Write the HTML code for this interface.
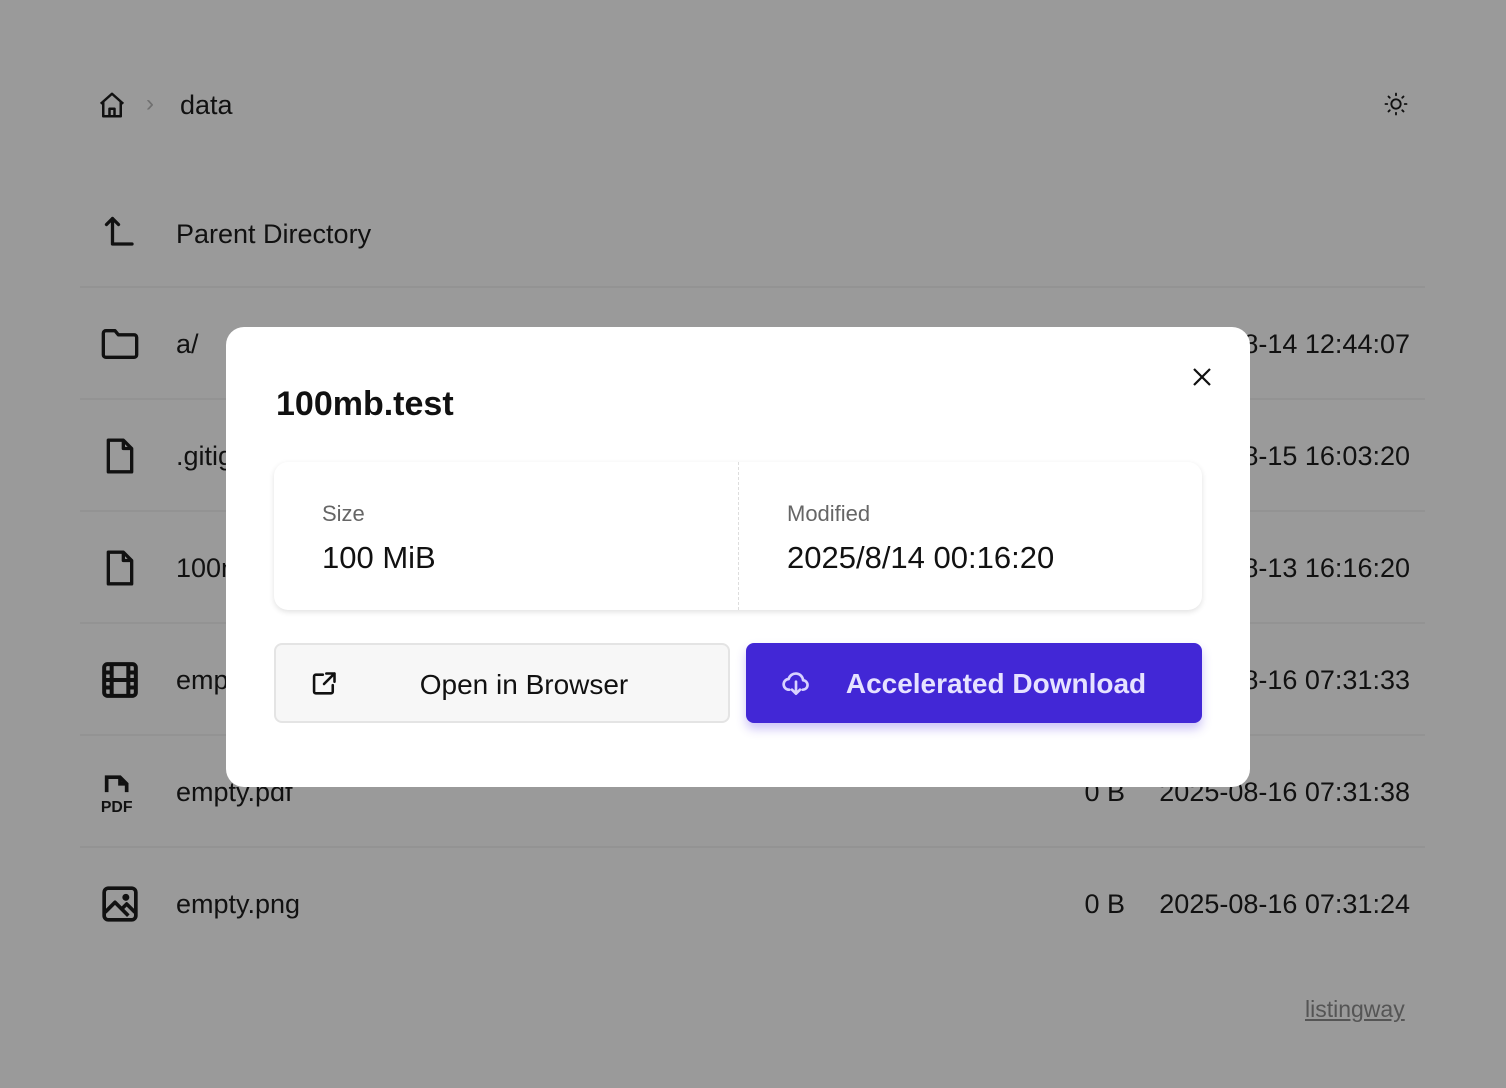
<!DOCTYPE html>
<html><head><meta charset="utf-8"><style>
*{box-sizing:border-box;margin:0;padding:0}
body{width:1506px;height:1088px;background:#9a9a9a;font-family:"Liberation Sans",sans-serif;color:#111;position:relative;overflow:hidden}
.abs{position:absolute}
.row{position:absolute;left:80px;width:1345px;height:112px;border-top:2px solid #939393}
.row .ic{position:absolute;left:20px;top:36px}
.row .nm{position:absolute;left:96px;top:41px;font-size:27px}
.row .sz{position:absolute;right:300px;top:41px;font-size:27px}
.row .dt{position:absolute;right:15px;top:41px;font-size:27px}
svg{display:block}
</style></head><body>
<svg class="abs" style="left:97px;top:90px" width="30" height="30" viewBox="0 0 24 24" fill="none" stroke="#111" stroke-width="2" stroke-linejoin="round"><path d="M3 11L12 3l9 8M5 9.5V21h14V9.5M10 21v-6h4v6"/></svg>
<div class="abs" style="left:146px;top:90px;font-size:24px;color:#707070">›</div>
<div class="abs" style="left:180px;top:90px;font-size:27px">data</div>
<svg class="abs" style="left:1382px;top:90px" width="28" height="28" viewBox="0 0 24 24" fill="none" stroke="#111" stroke-width="1.6" stroke-linecap="round"><circle cx="12" cy="12" r="4"/><path d="M12 3v1.5M12 19.5V21M3 12h1.5M19.5 12H21M5.6 5.6l1 1M17.4 17.4l1 1M5.6 18.4l1-1M17.4 6.6l1-1"/></svg>

<svg class="abs" style="left:102px;top:214px" width="36" height="36" viewBox="0 0 24 24" fill="none" stroke="#111" stroke-width="2.2" stroke-linecap="round" stroke-linejoin="round"><path d="M3 7l4-4 4 4M7 3v17h13"/></svg>
<div class="abs" style="left:176px;top:219px;font-size:27px">Parent Directory</div>

<div class="row" style="top:286px"><svg class="ic" width="40" height="40" viewBox="0 0 24 24" fill="none" stroke="#111" stroke-width="2" stroke-linejoin="round"><path d="M2 5.5a1.5 1.5 0 011.5-1.5H9l2 2.5h9.5A1.5 1.5 0 0122 8v10.5a1.5 1.5 0 01-1.5 1.5h-17A1.5 1.5 0 012 18.5z"/></svg><div class="nm">a/</div><div class="dt">2025-08-14 12:44:07</div></div>
<div class="row" style="top:398px"><svg class="ic" width="40" height="40" viewBox="0 0 24 24" fill="none" stroke="#111" stroke-width="2" stroke-linejoin="round"><path d="M5 2.5h9l5 5v14H5z M14 2.5v5h5"/></svg><div class="nm">.gitignore</div><div class="dt">2025-08-15 16:03:20</div></div>
<div class="row" style="top:510px"><svg class="ic" width="40" height="40" viewBox="0 0 24 24" fill="none" stroke="#111" stroke-width="2" stroke-linejoin="round"><path d="M5 2.5h9l5 5v14H5z M14 2.5v5h5"/></svg><div class="nm">100mb.test</div><div class="dt">2025-08-13 16:16:20</div></div>
<div class="row" style="top:622px"><svg class="ic" width="40" height="40" viewBox="0 0 24 24" fill="none" stroke="#111" stroke-width="2.4"><rect x="2.5" y="2.5" width="19" height="19" rx="2"/><path d="M7 3v18M17 3v18M7 12h10M3 7.5h4M3 12h4M3 16.5h4M17 7.5h4M17 12h4M17 16.5h4"/></svg><div class="nm">empty.mp4</div><div class="dt">2025-08-16 07:31:33</div></div>
<div class="row" style="top:734px"><svg class="ic" width="40" height="42" viewBox="0 0 24 25" fill="none" stroke="#111" stroke-width="2.2"><path d="M4 12V3h8l4 4v5M12 3v4h4"/><text x="0.5" y="24" font-family="Liberation Sans" font-weight="bold" font-size="9.5" fill="#111" stroke="none">PDF</text></svg><div class="nm">empty.pdf</div><div class="sz">0 B</div><div class="dt">2025-08-16 07:31:38</div></div>
<div class="row" style="top:846px"><svg class="ic" width="40" height="40" viewBox="0 0 24 24" fill="none" stroke="#111" stroke-width="2.2" stroke-linejoin="round"><rect x="2.5" y="2.5" width="19" height="19" rx="2.5"/><path d="M3 17l6-6 8 8M13 15l3-3 5 5"/><circle cx="15.5" cy="8" r="1" fill="#111"/></svg><div class="nm">empty.png</div><div class="sz">0 B</div><div class="dt">2025-08-16 07:31:24</div></div>
<div class="abs" style="left:1305px;top:996px;font-size:23px;color:#555;text-decoration:underline">listingway</div>

<div class="abs" style="left:226px;top:327px;width:1024px;height:460px;background:#fff;border-radius:18px">
 <div class="abs" style="left:50px;top:58px;font-size:34px;font-weight:bold">100mb.test</div>
 <svg class="abs" style="left:964px;top:38px" width="24" height="24" viewBox="0 0 24 24" stroke="#111" stroke-width="2.2"><path d="M4 4l16 16M20 4L4 20"/></svg>
 <div class="abs" style="left:48px;top:135px;width:928px;height:148px;border-radius:14px;box-shadow:0 2px 6px rgba(0,0,0,0.12);background:#fff">
  <div class="abs" style="left:464px;top:0;height:148px;border-left:1px dashed #ddd"></div>
  <div class="abs" style="left:48px;top:39px;font-size:22px;color:#666">Size</div>
  <div class="abs" style="left:48px;top:78px;font-size:31px">100 MiB</div>
  <div class="abs" style="left:513px;top:39px;font-size:22px;color:#666">Modified</div>
  <div class="abs" style="left:513px;top:78px;font-size:31px">2025/8/14 00:16:20</div>
 </div>
 <div class="abs" style="left:48px;top:316px;width:456px;height:80px;border:2px solid #e4e4e4;border-radius:8px;background:#f7f7f7">
  <svg class="abs" style="left:34px;top:25px" width="28" height="28" viewBox="0 0 24 24" fill="none" stroke="#111" stroke-width="2.2" stroke-linecap="round" stroke-linejoin="round"><path d="M11 4H5a1.5 1.5 0 00-1.5 1.5v13A1.5 1.5 0 005 20h13a1.5 1.5 0 001.5-1.5V13M14 3h7v7M21 3l-9 9"/></svg>
  <div class="abs" style="left:0;width:456px;padding-left:40px;text-align:center;top:24px;font-size:28px">Open in Browser</div>
 </div>
 <div class="abs" style="left:520px;top:316px;width:456px;height:80px;border-radius:8px;background:#4227d6;box-shadow:0 6px 10px rgba(90,60,230,0.3)">
  <svg class="abs" style="left:34px;top:24px" width="32" height="32" viewBox="0 0 24 24" fill="none" stroke="#d8d2ff" stroke-width="2" stroke-linecap="round" stroke-linejoin="round"><path d="M7 17a4 4 0 01-.5-8 5.5 5.5 0 0110.8 1A3.5 3.5 0 0117 17M12 11v9M9 17l3 3 3-3"/></svg>
  <div class="abs" style="left:0;width:456px;padding-left:44px;text-align:center;top:25px;font-size:28px;font-weight:bold;color:#e6e2ff">Accelerated Download</div>
 </div>
</div>
</body></html>
